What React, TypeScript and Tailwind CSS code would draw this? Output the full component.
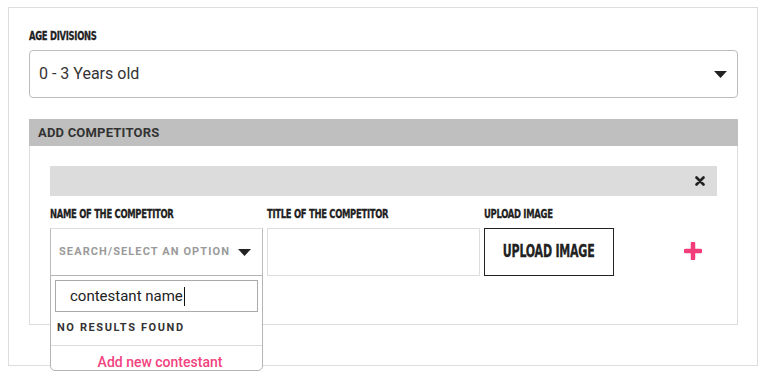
import { useState } from "react";

const condensed = {
  fontFamily: '"DejaVu Sans Condensed", "DejaVu Sans", sans-serif',
  fontStretch: "condensed" as const,
};

function Label({ children }: { children: string }) {
  return (
    <div className="h-[18px] overflow-visible whitespace-nowrap">
      <span
        style={condensed}
        className="inline-block origin-left scale-x-[0.72] text-[13px] font-bold tracking-[-0.4px] text-[#222] leading-[18px] [-webkit-text-stroke:0.3px_#222]"
      >
        {children}
      </span>
    </div>
  );
}

function Caret({ className = "" }: { className?: string }) {
  return (
    <svg width="13" height="7" viewBox="0 0 13 7" className={className}>
      <path d="M0 0 H13 L6.5 7 Z" fill="#222" />
    </svg>
  );
}

export default function App() {
  const [query] = useState("contestant name");

  return (
    <div className="w-[775px] h-[387px] bg-white pl-[8px] pt-[7px] font-['Roboto',sans-serif] text-[#333]">
      <div className="w-[750px] h-[359px] border border-[#dddddd] pl-[20px] pr-[19px] pt-[15px]">
        {/* Age divisions */}
        <Label>AGE DIVISIONS</Label>
        <div className="mt-[9px] h-[48px] flex items-center justify-between rounded-[4px] border border-[#bdbdbd] pl-[9px] pr-[10px]">
          <span className="text-[16px] text-[#333]">0 - 3 Years old</span>
          <Caret />
        </div>

        {/* Competitors section */}
        <div className="mt-[21px] h-[27px] bg-[#bfbfbf] flex items-center pl-[9px]">
          <span className="text-[13px] font-bold tracking-[0.2px] text-[#333]">ADD COMPETITORS</span>
        </div>
        <div className="h-[179px] border border-t-0 border-[#dddddd] px-[20px] pt-[20px]">
          <div className="h-[30px] bg-[#dcdcdc] flex items-center justify-end pr-[12px]">
            <svg width="10" height="10" viewBox="0 0 10 10">
              <path d="M1.5 1.5 L8.5 8.5 M8.5 1.5 L1.5 8.5" stroke="#222" strokeWidth="2.6" strokeLinecap="round" />
            </svg>
          </div>

          <div className="mt-[5px] flex items-start gap-[4px]">
            {/* Name */}
            <div className="w-[213px]">
              <Label>NAME OF THE COMPETITOR</Label>
              <div className="relative mt-[9px]">
                <div className="h-[48px] flex items-center justify-between border border-[#bbbbbb] border-t-[#dddddd] pl-[8px] pr-[11px]">
                  <span className="text-[11px] font-bold tracking-[1.1px] text-[#9a9a9a]">SEARCH/SELECT AN OPTION</span>
                  <Caret />
                </div>
                <div className="absolute left-0 top-[47px] w-[213px] h-[96px] overflow-hidden rounded-b-[5px] border border-[#b5b5b5] bg-white">
                  <div className="mx-[4px] mt-[4px] h-[32px] border border-[#aaaaaa] flex items-center pl-[14px] text-[15px] text-[#222]">
                    {query}
                    <span className="ml-[1px] inline-block w-[1px] h-[19px] bg-[#111]" />
                  </div>
                  <div className="h-[33px] flex items-center pl-[6px] text-[11px] font-bold tracking-[1.6px] text-[#333]">
                    NO RESULTS FOUND
                  </div>
                  <div className="border-t border-[#dddddd] pt-[6px] pl-[7px] text-center text-[14px] font-medium text-[#f2437f]">
                    Add new contestant
                  </div>
                </div>
              </div>
            </div>

            {/* Title */}
            <div className="w-[213px]">
              <Label>TITLE OF THE COMPETITOR</Label>
              <div className="mt-[9px] h-[48px] border border-[#dddddd]" />
            </div>

            {/* Upload */}
            <div className="w-[130px]">
              <Label>UPLOAD IMAGE</Label>
              <div className="mt-[9px] h-[48px] border-[1.5px] border-[#222] flex items-center justify-center whitespace-nowrap">
                <span
                  style={condensed}
                  className="inline-block scale-x-[0.72] text-[17px] font-bold tracking-[-0.3px] text-[#222] [-webkit-text-stroke:0.3px_#222]"
                >
                  UPLOAD IMAGE
                </span>
              </div>
            </div>

            {/* Add */}
            <div className="ml-[66px] pt-[41px]">
              <svg width="18" height="18" viewBox="0 0 18 18">
                <path d="M9 1.5 V16.5 M1.5 9 H16.5" stroke="#f23d7b" strokeWidth="4.5" strokeLinecap="round" />
              </svg>
            </div>
          </div>
        </div>
      </div>
    </div>
  );
}
